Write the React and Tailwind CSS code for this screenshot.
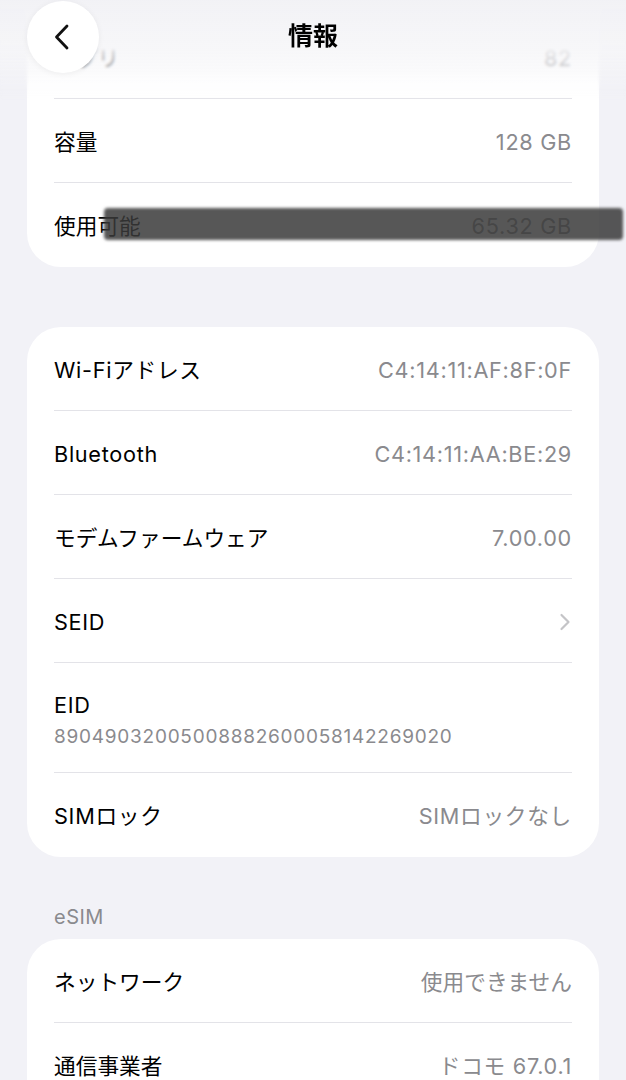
import React from "react";

const font = { fontFamily: 'Inter, "Noto Sans CJK JP", sans-serif' };

function T({ children, className = "", latin }) {
  return (
    <span className={`text-[21.7px] ${latin ? "tracking-[0.7px]" : "tracking-[0px]"} ${className}`}>{children}</span>
  );
}

function Row({ label, value, chevron, last, labelLatin, valueLatin, children }) {
  return (
    <div
      className={`relative flex h-[84px] items-center justify-between pt-[3px] ${last ? "" : "border-b border-[#e3e3e8]"}`}
    >
      <T latin={labelLatin} className="text-black">{label}</T>
      {value && <T latin={valueLatin} className="text-[#8a8a8e]">{value}</T>}
      {chevron && (
        <svg width="12" height="18" viewBox="0 0 12 18" className="mr-[1px]">
          <path d="M2.5 2 L9.5 9 L2.5 16" fill="none" stroke="#c4c4c7" strokeWidth="2.2" strokeLinecap="round" strokeLinejoin="round" />
        </svg>
      )}
      {children}
    </div>
  );
}

export default function App() {
  return (
    <div className="relative min-h-[1080px] w-[626px] overflow-hidden bg-[#f2f2f7]" style={font}>
      {/* Card 1 (scrolled) */}
      <div className="mx-[27px] rounded-b-[34px] bg-white px-[27px] pt-[15px]">
        <Row label="アプリ" value="82" valueLatin />
        <Row label="容量" value="128 GB" valueLatin />
        <Row label="使用可能" value="65.32 GB" valueLatin last>
          <div className="absolute left-[50px] right-[-51px] top-[25px] h-[32px] rounded-[4px] bg-[#3a3a3a]/85 blur-[1.5px]" />
        </Row>
      </div>

      {/* Card 2 */}
      <div className="mx-[27px] mt-[60px] rounded-[34px] bg-white px-[27px]">
        <Row label="Wi-Fiアドレス" labelLatin value="C4:14:11:AF:8F:0F" valueLatin />
        <Row label="Bluetooth" labelLatin value="C4:14:11:AA:BE:29" valueLatin />
        <Row label="モデムファームウェア" value="7.00.00" valueLatin />
        <Row label="SEID" labelLatin chevron />
        <div className="flex h-[110px] flex-col justify-center border-b border-[#e3e3e8] pt-[4px]">
          <span className="text-[21.7px] leading-[28px] tracking-[0.7px] text-black">EID</span>
          <span className="mt-[6px] text-[19px] leading-[24px] tracking-[0.75px] text-[#8a8a8e]">
            89049032005008882600058142269020
          </span>
        </div>
        <Row label="SIMロック" labelLatin value="SIMロックなし" valueLatin last />
      </div>

      {/* eSIM header */}
      <div className="flex h-[82px] items-end px-[54px] pb-[10px]">
        <span className="text-[20px] leading-[24px] tracking-[0.5px] text-[#8a8a8e]">eSIM</span>
      </div>

      {/* Card 3 */}
      <div className="mx-[27px] rounded-t-[34px] bg-white px-[27px] pb-[40px]">
        <Row label="ネットワーク" value="使用できません" />
        <Row label="通信事業者" value="ドコモ 67.0.1" valueLatin last />
      </div>

      {/* Top scroll-edge fade */}
      <div className="pointer-events-none absolute left-0 right-0 top-0 h-[100px] bg-gradient-to-b from-[#f1f1f5]/95 via-[#f6f6f8]/85 to-transparent backdrop-blur-[1.5px] [mask-image:linear-gradient(to_bottom,black_70%,transparent)]" />

      {/* Nav bar */}
      <div className="absolute left-0 right-0 top-0 flex h-[74px] items-center justify-center">
        <span className="text-[25px] font-bold text-black">情報</span>
      </div>
      <div className="absolute left-[27px] top-[1px] flex h-[72px] w-[72px] items-center justify-center rounded-full bg-white shadow-[0_1px_6px_rgba(0,0,0,0.06)]">
        <svg width="20" height="28" viewBox="0 0 20 28" className="-ml-[3px]">
          <path d="M15 3 L4.5 14 L15 25" fill="none" stroke="#111" strokeWidth="2.8" strokeLinecap="round" strokeLinejoin="round" />
        </svg>
      </div>
    </div>
  );
}
